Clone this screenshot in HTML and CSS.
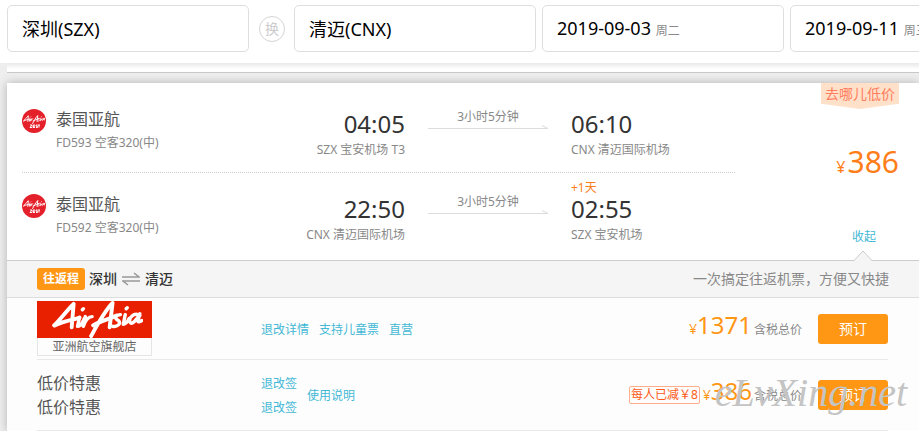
FILE: index.html
```html
<!DOCTYPE html>
<html lang="zh-CN">
<head>
<meta charset="utf-8">
<title>深圳 – 清迈</title>
<link rel="stylesheet" href="styles.css">
</head>
<body>
<svg class="defs" aria-hidden="true">
  <symbol id="script-mark" viewBox="0 0 92 38">
    <g fill="none" stroke="#fff" stroke-linecap="round" stroke-linejoin="round">
      <path stroke-width="4" d="M2 25C7 21 13 12 22 3L20 27M3 25C12 20 20 20 28 17M40 36C46 25 54 10 62 2L59 27M42 25C50 20 58 19 66 15"/>
      <path stroke-width="3.5" d="M28 17L26 26Q29 27 33 18M34 16L32 26C34 20 37 16 41 16M70 14C64 15 64 18 68 20C71 23 67 27 62 26M75 14L73 24Q76 24 79 18M90 15C84 11 78 18 80 22C82 25 87 19 90 13L88 21Q90 22 92 20M31 9L32 8M76 8L77 7"/>
    </g>
  </symbol>
  <symbol id="carrier" viewBox="0 0 24 24">
    <circle cx="12" cy="12" r="12" fill="#e4202b"/>
    <use href="#script-mark" x="1" y="6" width="22" height="9"/>
    <path fill="none" stroke="#fff" stroke-width="1" d="M8 16h2l-2 2.500h2M13 16h-2v2.500h2M11 17.200h2M15.500 16h-1.500v1.200h1.500v1.300h-1.500M16 16h2M17 16v2.500"/>
  </symbol>
  <symbol id="arrow" viewBox="0 0 120 8">
    <path fill="none" stroke="#dcdcdc" d="M0 5.500h120M114 2.500l6 3"/>
  </symbol>
</svg>

<header class="search">
  <input class="field" type="text" aria-label="出发城市" value="深圳(SZX)">
  <button class="swap" type="button">换</button>
  <input class="field" type="text" aria-label="到达城市" value="清迈(CNX)">
  <button class="field date" type="button">2019-09-03 <small>周二</small></button>
  <button class="field date" type="button">2019-09-11 <small>周三</small></button>
</header>

<main>
  <div class="previous"></div>
  <article class="card">
    <section class="summary">
      <div class="legs">
        <div class="leg">
          <svg class="badge"><use href="#carrier"/></svg>
          <div class="airline"><h2>泰国亚航</h2><p>FD593 空客320(中)</p></div>
          <div class="stop from"><time>04:05</time><p>SZX 宝安机场 T3</p></div>
          <div class="duration"><p>3小时5分钟</p><svg class="line"><use href="#arrow"/></svg></div>
          <div class="stop"><time>06:10</time><p>CNX 清迈国际机场</p></div>
        </div>
        <div class="leg">
          <svg class="badge"><use href="#carrier"/></svg>
          <div class="airline"><h2>泰国亚航</h2><p>FD592 空客320(中)</p></div>
          <div class="stop from"><time>22:50</time><p>CNX 清迈国际机场</p></div>
          <div class="duration"><p>3小时5分钟</p><svg class="line"><use href="#arrow"/></svg></div>
          <div class="stop"><span class="nextday">+1天</span><time>02:55</time><p>SZX 宝安机场</p></div>
        </div>
      </div>
      <div class="best">
        <span class="ribbon">去哪儿低价</span>
        <div class="price large"><span>¥</span>386</div>
        <a class="collapse" href="#offers">收起</a>
      </div>
      <svg class="notch" viewBox="0 0 18 11"><path fill="#f5f5f5" d="M0 11L9 1l9 10z"/><path fill="none" stroke="#ccc" d="M0 10.500L9 1l9 9.500"/></svg>
    </section>

    <section id="offers">
      <div class="route">
        <span class="tag">往返程</span>
        <strong>深圳</strong>
        <svg class="both" viewBox="0 0 18 14"><path fill="none" stroke="#999" stroke-width="1.500" d="M0 5h17l-5-4M18 9H1l5 4"/></svg>
        <strong>清迈</strong>
        <span class="slogan">一次搞定往返机票，方便又快捷</span>
      </div>
      <div class="offer">
        <div class="vendor">
          <div class="shop"><svg class="logo"><use href="#script-mark" x="14" y="0" width="92" height="37"/></svg><span>亚洲航空旗舰店</span></div>
        </div>
        <div class="links"><a href="#rules">退改详情</a><a href="#child">支持儿童票</a><a href="#direct">直营</a></div>
        <div class="total"><div class="price"><span>¥</span>1371</div><small>含税总价</small></div>
        <button class="book" type="button">预订</button>
      </div>
      <div class="offer second">
        <div class="vendor"><p>低价特惠</p><p>低价特惠</p></div>
        <div class="links"><div class="pair"><a href="#rules1">退改签</a><a href="#rules2">退改签</a></div><a href="#usage">使用说明</a></div>
        <div class="total"><span class="cut">每人已减￥8</span><div class="price"><span>¥</span>386</div><small>含税总价</small></div>
        <button class="book" type="button">预订</button>
      </div>
    </section>
  </article>
</main>
<div class="watermark">eLvXing.net</div>
</body>
</html>
```
FILE: styles.css
```css
* { box-sizing: border-box; }
body {
  margin: 0;
  overflow: hidden;
  background: #eee;
  color: #888;
  font: 12px/18px "Noto Sans", "Noto Sans CJK SC", sans-serif;
}
h2, p { margin: 0; font-weight: 400; }
button, input { font-family: inherit; }
a { color: #43b8d5; text-decoration: none; }
.defs { position: absolute; width: 0; height: 0; }

.search {
  position: relative;
  display: flex;
  align-items: center;
  height: 63px;
  padding: 0 0 6px 7px;
  overflow: hidden;
  background: #fff;
}
.field {
  flex: none;
  width: 242px;
  height: 47px;
  margin-right: 6px;
  padding: 0 14px 2px;
  border: 1px solid #dedede;
  border-radius: 5px;
  background: #fff;
  color: #000;
  font-size: 18px;
  text-align: left;
}
.field:first-child { margin-right: 10px; }
.date small { color: #888; font-size: 12px; }
.swap {
  flex: none;
  width: 26px;
  height: 26px;
  margin-right: 9px;
  padding: 0;
  border: 1px solid #d5d5d5;
  border-radius: 50%;
  background: #fff;
  color: #ccc;
  font-size: 14px;
  line-height: 24px;
}

main { padding-left: 7px; }
.previous {
  height: 10px;
  margin-bottom: 10px;
  border-bottom: 1px solid #c8c8c8;
  background: linear-gradient(#e8e8e8, #fff 6px);
}
.card { background: #fdfdfd; box-shadow: 0 0 9px rgba(0, 0, 0, .25); }
.summary { position: relative; display: flex; height: 178px; border-bottom: 1px solid #ccc; background: #fff; }
.legs { flex: none; width: 728px; padding-left: 15px; }
.leg { display: flex; height: 89px; padding-top: 26px; }
.leg + .leg { border-top: 1px dotted #ccc; padding-top: 21px; }
.badge { flex: none; width: 24px; height: 24px; margin-right: 10px; }
.airline { flex: none; width: 210px; }
.airline h2 { margin-bottom: 4px; color: #555; font-size: 16px; line-height: 21px; }
.stop { position: relative; flex: none; width: 164px; }
.stop time { display: block; margin-bottom: 2px; color: #333; font-size: 24px; line-height: 30px; }
.from { width: 139px; text-align: right; }
.duration { flex: none; width: 120px; margin: 0 23px; text-align: center; }
.duration p { line-height: 16px; }
.line { display: block; width: 120px; height: 8px; margin-top: -2px; }
.nextday { position: absolute; top: -15px; color: #ff7e1a; }
.best { display: flex; flex: 1; flex-direction: column; align-items: flex-end; padding-right: 20px; }
.ribbon {
  width: 78px;
  height: 26px;
  background: #ffe1ca;
  clip-path: polygon(0 0, 100% 0, 100% 80%, 50% 100%, 0 80%);
  color: #ff7c5c;
  font-size: 14px;
  line-height: 21px;
  text-align: center;
}
.price { color: #ff9614; font-size: 24px; line-height: 30px; white-space: nowrap; }
.price span { font-size: 14px; }
.large { margin-top: 33px; color: #ff7e1a; font-size: 30px; line-height: 40px; }
.large span { margin-right: 2px; font-size: 16px; }
.collapse { margin: 44px 23px 0 0; line-height: 12px; }
.notch { position: absolute; right: 47px; bottom: -1px; width: 18px; height: 11px; }

.route {
  display: flex;
  align-items: center;
  height: 37px;
  padding: 0 30px;
  border-bottom: 1px solid #ddd;
  background: #f5f5f5;
}
.tag {
  margin-right: 4px;
  padding: 2px 6px;
  border-radius: 3px;
  background: #ff9614;
  color: #fff;
  font-weight: 700;
}
.route strong { color: #333; font-size: 14px; font-weight: 500; }
.both { width: 18px; height: 14px; margin: 0 5px; }
.slogan { margin-left: auto; font-size: 14px; }
.offer { display: flex; align-items: center; height: 62px; margin: 0 31px 0 30px; border-bottom: 1px solid #e8e8e8; }
.second { height: 71px; }
.vendor { width: 224px; }
.vendor p { color: #555; font-size: 16px; line-height: 24px; }
.shop { width: 115px; border: 1px solid #e5e5e5; border-top: 0; color: #666; line-height: 17px; text-align: center; }
.logo { display: block; width: 115px; height: 37px; margin-left: -1px; background: #e82000; }
.links { display: flex; align-items: center; gap: 10px; padding-top: 2px; }
.pair { display: grid; line-height: 24px; }
.total { display: flex; align-items: center; margin-left: auto; }
.total small { margin: 2px 16px 0 2px; font-size: 12px; }
.total .price { margin-bottom: 4px; }
.cut { margin-right: 3px; padding: 0 1px; border: 1px solid #ffae8b; border-radius: 2px; color: #ff5b16; line-height: 16px; }
.book {
  width: 70px;
  height: 30px;
  padding: 0 0 2px;
  border: 0;
  border-radius: 3px;
  background: #ff9614;
  color: #fff;
  font-size: 14px;
}
.watermark {
  position: absolute;
  right: 12px;
  bottom: 18px;
  color: #c4c4c4;
  font: italic 40px/40px "Liberation Serif", serif;
}
```
